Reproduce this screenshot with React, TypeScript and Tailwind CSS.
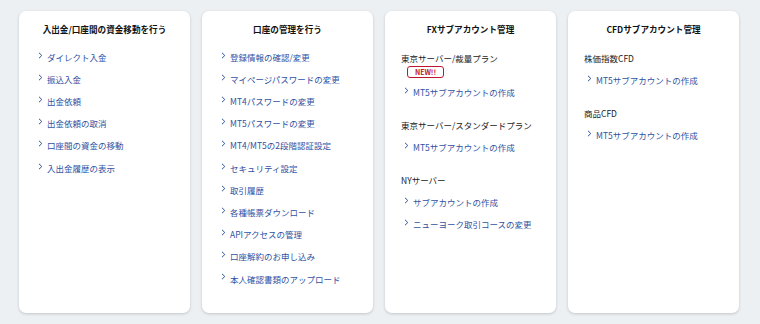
import React from "react";

type Section = { label?: string; badge?: boolean; links: string[] };
type Card = { title: string; sections: Section[] };

const cards: Card[] = [
  {
    title: "入出金/口座間の資金移動を行う",
    sections: [
      {
        links: ["ダイレクト入金", "振込入金", "出金依頼", "出金依頼の取消", "口座間の資金の移動", "入出金履歴の表示"],
      },
    ],
  },
  {
    title: "口座の管理を行う",
    sections: [
      {
        links: [
          "登録情報の確認/変更",
          "マイページパスワードの変更",
          "MT4パスワードの変更",
          "MT5パスワードの変更",
          "MT4/MT5の2段階認証設定",
          "セキュリティ設定",
          "取引履歴",
          "各種帳票ダウンロード",
          "APIアクセスの管理",
          "口座解約のお申し込み",
          "本人確認書類のアップロード",
        ],
      },
    ],
  },
  {
    title: "FXサブアカウント管理",
    sections: [
      { label: "東京サーバー/裁量プラン", badge: true, links: ["MT5サブアカウントの作成"] },
      { label: "東京サーバー/スタンダードプラン", links: ["MT5サブアカウントの作成"] },
      { label: "NYサーバー", links: ["サブアカウントの作成", "ニューヨーク取引コースの変更"] },
    ],
  },
  {
    title: "CFDサブアカウント管理",
    sections: [
      { label: "株価指数CFD", links: ["MT5サブアカウントの作成"] },
      { label: "商品CFD", links: ["MT5サブアカウントの作成"] },
    ],
  },
];

function Chevron() {
  return (
    <svg width="5" height="7" viewBox="0 0 5 7" className="mt-[-4px] mr-[4px] shrink-0">
      <path d="M1 0.8 L3.8 3.5 L1 6.2" fill="none" stroke="#2d4f9e" strokeWidth="1" />
    </svg>
  );
}

function LinkRow({ text }: { text: string }) {
  return (
    <a href="#" className="flex items-center h-[22.2px] pl-[3px] text-[8.5px] text-[#2f52a3] whitespace-nowrap">
      <Chevron />
      <span>{text}</span>
    </a>
  );
}

export default function App() {
  return (
    <div
      className="w-[760px] h-[324px] bg-[#edf0f3] flex gap-[12px] pl-[19px] pt-[11px]"
      style={{ fontFamily: '"Noto Sans CJK JP", "Noto Sans", sans-serif' }}
    >
      {cards.map((card) => (
        <div
          key={card.title}
          className="w-[171px] h-[302px] bg-white rounded-[7px] shadow-[0_1px_3px_rgba(0,0,0,0.18)] px-[16px] pt-[12px]"
        >
          <h2 className="text-center text-[8.6px] leading-[12px] font-bold text-[#111]">{card.title}</h2>
          {card.sections[0].label ? (
            <div className="mt-[16px]">
              {card.sections.map((s, i) => (
                <div key={i} className={i > 0 ? "mt-[15px]" : ""}>
                  <div className="text-[8.5px] leading-[14px] text-[#222] whitespace-nowrap">{s.label}</div>
                  {s.badge && (
                    <div className="ml-[6px] mt-[1px] w-[37px] h-[12px] border border-[#c0152f] rounded-[3px] flex items-center justify-center text-[7px] font-bold text-[#c0152f] leading-none">
                      NEW!!
                    </div>
                  )}
                  <div className={s.badge ? "mt-[3px]" : "mt-[4px]"}>
                    {s.links.map((l) => (
                      <LinkRow key={l} text={l} />
                    ))}
                  </div>
                </div>
              ))}
            </div>
          ) : (
            <div className="mt-[11px]">
              {card.sections[0].links.map((l) => (
                <LinkRow key={l} text={l} />
              ))}
            </div>
          )}
        </div>
      ))}
    </div>
  );
}
